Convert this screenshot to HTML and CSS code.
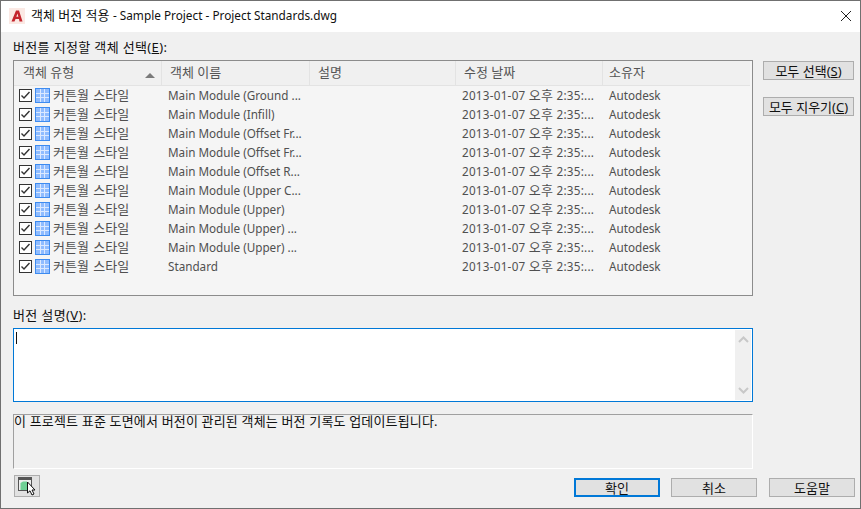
FILE: index.html
```html
<!DOCTYPE html>
<html lang="ko">
<head>
<meta charset="utf-8">
<title>객체 버전 적용</title>
<link rel="stylesheet" href="styles.css">
</head>
<body>
<svg class="defs" width="0" height="0">
  <symbol id="chk" viewBox="0 0 13 13">
    <rect x="0.5" y="0.5" width="12" height="12" fill="#fff" stroke="#333"/>
    <path d="M2.5 6.5 L5 9 L10.5 3" fill="none" stroke="#333" stroke-width="1.4"/>
  </symbol>
  <symbol id="cw" viewBox="0 0 15 15">
    <rect x="0.5" y="0.5" width="14" height="14" fill="#8fbcff" stroke="#3d8bf0"/>
    <path d="M5.5 1V14M9.5 1V14M1 5.5H14M1 9.5H14" stroke="#dbe9ff" fill="none"/>
  </symbol>
</svg>
<div class="window">
  <header class="titlebar">
    <svg class="app-icon" width="16" height="16" viewBox="0 0 16 16">
      <rect width="16" height="16" fill="#fbe9e4"/>
      <path d="M2.5 13.5 L7 2.5 H10 L13.5 13.5 H10.5 L10 11 H6.5 L5.5 13.5 Z M7.3 8.7 H9.4 L8.5 5.5 Z" fill="#c4252d" fill-rule="evenodd"/>
    </svg>
    <span class="title">객체 버전 적용 <span class="lat">- Sample Project - Project Standards.dwg</span></span>
    <svg class="close" width="10" height="10" viewBox="0 0 10 10">
      <path d="M0 0 L10 10 M10 0 L0 10" stroke="#222" fill="none"/>
    </svg>
  </header>
  <main class="content">
    <div class="top">
      <section class="left">
        <div class="label">버전를 지정할 객체 선택(<u>E</u>):</div>
        <div class="list">
          <div class="row head">
            <div class="hcell first">객체 유형<span class="sort"></span></div>
            <div class="hcell">객체 이름</div>
            <div class="hcell">설명</div>
            <div class="hcell">수정 날짜</div>
            <div class="hcell last">소유자</div>
          </div>
          <div class="row item"><div class="type"><svg class="ck"><use href="#chk"/></svg><svg class="cw"><use href="#cw"/></svg><span>커튼월 스타일</span></div><div>Main Module (Ground ...</div><div></div><div class="date">2013-01-07 <span class="ko">오후</span> 2:35:...</div><div>Autodesk</div></div>
          <div class="row item"><div class="type"><svg class="ck"><use href="#chk"/></svg><svg class="cw"><use href="#cw"/></svg><span>커튼월 스타일</span></div><div>Main Module (Infill)</div><div></div><div class="date">2013-01-07 <span class="ko">오후</span> 2:35:...</div><div>Autodesk</div></div>
          <div class="row item"><div class="type"><svg class="ck"><use href="#chk"/></svg><svg class="cw"><use href="#cw"/></svg><span>커튼월 스타일</span></div><div>Main Module (Offset Fr...</div><div></div><div class="date">2013-01-07 <span class="ko">오후</span> 2:35:...</div><div>Autodesk</div></div>
          <div class="row item"><div class="type"><svg class="ck"><use href="#chk"/></svg><svg class="cw"><use href="#cw"/></svg><span>커튼월 스타일</span></div><div>Main Module (Offset Fr...</div><div></div><div class="date">2013-01-07 <span class="ko">오후</span> 2:35:...</div><div>Autodesk</div></div>
          <div class="row item"><div class="type"><svg class="ck"><use href="#chk"/></svg><svg class="cw"><use href="#cw"/></svg><span>커튼월 스타일</span></div><div>Main Module (Offset R...</div><div></div><div class="date">2013-01-07 <span class="ko">오후</span> 2:35:...</div><div>Autodesk</div></div>
          <div class="row item"><div class="type"><svg class="ck"><use href="#chk"/></svg><svg class="cw"><use href="#cw"/></svg><span>커튼월 스타일</span></div><div>Main Module (Upper C...</div><div></div><div class="date">2013-01-07 <span class="ko">오후</span> 2:35:...</div><div>Autodesk</div></div>
          <div class="row item"><div class="type"><svg class="ck"><use href="#chk"/></svg><svg class="cw"><use href="#cw"/></svg><span>커튼월 스타일</span></div><div>Main Module (Upper)</div><div></div><div class="date">2013-01-07 <span class="ko">오후</span> 2:35:...</div><div>Autodesk</div></div>
          <div class="row item"><div class="type"><svg class="ck"><use href="#chk"/></svg><svg class="cw"><use href="#cw"/></svg><span>커튼월 스타일</span></div><div>Main Module (Upper) ...</div><div></div><div class="date">2013-01-07 <span class="ko">오후</span> 2:35:...</div><div>Autodesk</div></div>
          <div class="row item"><div class="type"><svg class="ck"><use href="#chk"/></svg><svg class="cw"><use href="#cw"/></svg><span>커튼월 스타일</span></div><div>Main Module (Upper) ...</div><div></div><div class="date">2013-01-07 <span class="ko">오후</span> 2:35:...</div><div>Autodesk</div></div>
          <div class="row item"><div class="type"><svg class="ck"><use href="#chk"/></svg><svg class="cw"><use href="#cw"/></svg><span>커튼월 스타일</span></div><div>Standard</div><div></div><div class="date">2013-01-07 <span class="ko">오후</span> 2:35:...</div><div>Autodesk</div></div>
        </div>
        <div class="label second">버전 설명(<u>V</u>):</div>
        <div class="input">
          <div class="caret"></div>
          <div class="scroll">
            <svg width="11" height="7" viewBox="0 0 11 7"><path d="M1 6 L5.5 1.5 L10 6" stroke="#c8c8c8" stroke-width="2" fill="none"/></svg>
            <svg width="11" height="7" viewBox="0 0 11 7"><path d="M1 1 L5.5 5.5 L10 1" stroke="#c8c8c8" stroke-width="2" fill="none"/></svg>
          </div>
        </div>
        <div class="info">이 프로젝트 표준 도면에서 버전이 관리된 객체는 버전 기록도 업데이트됩니다.</div>
      </section>
      <aside class="side">
        <button class="btn side-btn">모두 선택(<u>S</u>)</button>
        <button class="btn side-btn">모두 지우기(<u>C</u>)</button>
      </aside>
    </div>
    <footer class="bottom">
      <button class="btn pick">
        <svg width="20" height="20" viewBox="0 0 20 20">
          <rect x="1.5" y="1.5" width="13" height="13" fill="#eeeeee" stroke="#555"/>
          <rect x="1" y="1" width="14" height="3" fill="#555"/>
          <path d="M3.5 14 V7 L6 5.5 H10 V14 Z" fill="#6fd095"/>
          <path d="M10.5 6 V17 L13 14.8 L15 19 L17 18 L15 14 H18 Z" fill="#fff" stroke="#111"/>
        </svg>
      </button>
      <div class="actions">
        <button class="btn act primary">확인</button>
        <button class="btn act">취소</button>
        <button class="btn act help">도움말</button>
      </div>
    </footer>
  </main>
</div>
</body>
</html>
```

FILE: styles.css
```css
* { box-sizing: border-box; }
html, body { margin: 0; padding: 0; }
body {
  width: 861px;
  height: 509px;
  overflow: hidden;
  font-family: "Noto Sans", "Noto Sans CJK KR", sans-serif;
  font-size: 13px;
  color: #111;
}
.defs { display: block; height: 0; }
.window {
  width: 861px;
  height: 509px;
  display: flex;
  flex-direction: column;
  background: #f0f0f0;
  border: 1px solid #707070;
}
.titlebar {
  height: 31px;
  flex: none;
  display: flex;
  align-items: center;
  background: #fff;
  padding: 0 9px 2px 8px;
}
.title {
  margin-left: 6px;
  line-height: 29px;
  flex: 1;
  white-space: nowrap;
}
.lat { font-size: 11.8px; }
.content {
  flex: 1;
  display: flex;
  flex-direction: column;
  padding: 0 5px 10px 12px;
}
.top { display: flex; flex: none; }
.left { width: 740px; flex: none; }
.label {
  height: 28px;
  padding-top: 7px;
  line-height: 17px;
  white-space: nowrap;
  letter-spacing: 0.35px;
}
.list {
  height: 236px;
  background: #f5f5f5;
  border: 1px solid #8c8c8c;
  overflow: hidden;
}
.row {
  display: grid;
  grid-template-columns: 148px 148px 146px 147px 149px;
  white-space: nowrap;
}
.head {
  height: 25px;
  background: #f0f0f0;
  border-bottom: 1px solid #e3e3e3;
  margin-right: 2px;
  color: #555;
}
.hcell {
  position: relative;
  padding-left: 8px;
  line-height: 23px;
  border-right: 1px solid #e3e3e3;
}
.first { padding-left: 9px; }
.last { border-right: 0; padding-left: 6px; }
.sort {
  position: absolute;
  right: 6px;
  top: 12px;
  width: 0;
  height: 0;
  border-left: 5px solid transparent;
  border-right: 5px solid transparent;
  border-bottom: 5px solid #7a7a7a;
}
.item {
  height: 19px;
  line-height: 19px;
  color: #505050;
  font-size: 11.7px;
}
.item > div:nth-child(n+2) { padding-left: 6px; }
.date { letter-spacing: 0.25px; }
.ko { font-size: 13px; }
.type {
  display: flex;
  align-items: center;
  padding-left: 4px;
  font-size: 13px;
}
.ck { width: 13px; height: 13px; flex: none; margin-left: 1px; }
.cw { width: 15px; height: 15px; flex: none; margin-left: 3px; }
.type span { margin-left: 3px; word-spacing: 1px; }
.second { height: 32px; padding-top: 11px; }
.input {
  position: relative;
  height: 74px;
  background: #fff;
  border: 1px solid #0078d7;
}
.caret {
  position: absolute;
  left: 2px;
  top: 3px;
  width: 1px;
  height: 12px;
  background: #111;
}
.scroll {
  position: absolute;
  right: 1px;
  top: 1px;
  bottom: 1px;
  width: 16px;
  background: #f0f0f0;
  display: flex;
  flex-direction: column;
  align-items: center;
  justify-content: space-between;
  padding: 6px 0;
}
.info {
  height: 55px;
  margin-top: 12px;
  border-top: 1px solid #a0a0a0;
  border-left: 1px solid #a0a0a0;
  border-right: 1px solid #fff;
  border-bottom: 1px solid #fff;
  line-height: 12px;
  white-space: nowrap;
  letter-spacing: 0.17px;
}
.side {
  display: flex;
  flex-direction: column;
  gap: 17px;
  padding: 29px 0 0 10px;
}
.btn {
  font: inherit;
  color: #111;
  background: #e1e1e1;
  border: 1px solid #adadad;
  border-radius: 0;
  padding: 0;
  white-space: nowrap;
  display: flex;
  align-items: center;
  justify-content: center;
}
.side-btn { width: 91px; height: 19px; line-height: 14px; }
.bottom {
  display: flex;
  justify-content: space-between;
  align-items: flex-start;
  margin-top: 6px;
}
.pick { width: 26px; height: 22px; margin-left: 1px; }
.actions { display: flex; gap: 11px; margin-top: 3px; }
.act { width: 86px; height: 19px; }
.help { margin-left: 1px; }
.primary { border: 2px solid #0078d7; }
```
